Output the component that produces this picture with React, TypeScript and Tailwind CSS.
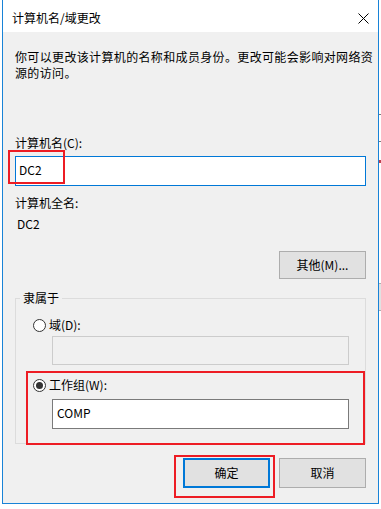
import React from 'react';

const font = { fontFamily: '"Noto Sans CJK SC", "Noto Sans", sans-serif' };

function Radio({ checked }: { checked?: boolean }) {
  return (
    <span className="w-[13px] h-[13px] rounded-full border border-[#333333] bg-white flex items-center justify-center shrink-0">
      {checked && <span className="w-[7px] h-[7px] rounded-full bg-[#333333]" />}
    </span>
  );
}

function Button({ label, focused }: { label: string; focused?: boolean }) {
  return (
    <div
      className={`w-[87px] h-[30px] flex items-center justify-center bg-[#e1e1e1] text-[12px] leading-4 text-black ${
        focused ? 'border-2 border-[#0078d7]' : 'border border-[#adadad]'
      }`}
    >
      {label}
    </div>
  );
}

export default function App() {
  return (
    <div className="w-[381px] h-[509px] bg-white relative overflow-hidden text-black" style={font}>
      {/* dialog window */}
      <div className="ml-[2px] w-[377px] h-[504px] border-x border-b border-[#1883d7] flex flex-col">
        {/* title bar */}
        <div className="h-[32px] bg-white flex items-center justify-between pl-[9px] pr-[9px] shrink-0">
          <span className="text-[12px] leading-4 mt-[4px]">计算机名/域更改</span>
          <svg width="11" height="11" viewBox="0 0 11 11" className="mt-[4px]">
            <path d="M0.5 0.5 L10.5 10.5 M10.5 0.5 L0.5 10.5" stroke="#000" strokeWidth="1" fill="none" />
          </svg>
        </div>

        {/* body */}
        <div className="flex-1 bg-[#f0f0f0] px-[12px] flex flex-col">
          <p className="mt-[17px] text-[12px] leading-4 tracking-[0.35px] whitespace-nowrap">
            你可以更改该计算机的名称和成员身份。更改可能会影响对网络资
            <br />
            源的访问。
          </p>

          <p className="mt-[54px] text-[12px] leading-4">计算机名(C):</p>
          <div className="mt-[5px] h-[30px] bg-white border border-[#0078d7] flex items-center pl-[3px] pb-[3px] text-[12px] leading-4">
            DC2
          </div>

          <p className="mt-[9px] text-[12px] leading-4">计算机全名:</p>
          <p className="mt-[5px] pl-[2px] text-[12px] leading-4">DC2</p>

          <div className="mt-[19px] flex justify-end">
            <div className="w-[87px] h-[28px] flex items-center justify-center bg-[#e1e1e1] border border-[#adadad] text-[12px] leading-4">
              其他(M)...
            </div>
          </div>

          {/* member of group */}
          <fieldset className="mt-[11px] border border-[#dcdcdc] pb-[14px] pr-[16px]">
            <legend className="ml-[4px] px-[3px] text-[12px] leading-4">隶属于</legend>
            <div className="mt-[11px] ml-[17px] h-[16px] flex items-center gap-[3px] text-[12px] leading-4">
              <Radio />
              <span>域(D):</span>
            </div>
            <div className="mt-[3px] ml-[36px] h-[29px] border border-[#cccccc] bg-[#f0f0f0]" />

            <div className="mt-[12px] ml-[17px] h-[16px] flex items-center gap-[3px] text-[12px] leading-4">
              <Radio checked />
              <span>工作组(W):</span>
            </div>
            <div className="mt-[6px] ml-[36px] h-[30px] border border-[#7a7a7a] bg-white flex items-center pl-[4px] pb-[2px] text-[12px] leading-4">
              COMP
            </div>
          </fieldset>

          <div className="mt-[14px] flex justify-end gap-[9px]">
            <Button label="确定" focused />
            <Button label="取消" />
          </div>
        </div>
      </div>

      {/* red annotation boxes */}
      <div className="absolute left-[8px] top-[150px] w-[57px] h-[34px] border-2 border-[#ed1c24]" />
      <div className="absolute left-[26px] top-[371px] w-[339px] h-[74px] border-2 border-[#ed1c24]" />
      <div className="absolute left-[174px] top-[455px] w-[101px] h-[43px] border-2 border-[#ed1c24]" />

      {/* edge of the window behind */}
      <div className="absolute left-[379px] top-[114px] w-[2px] h-px bg-[#7a7a7a]" />
      <div className="absolute left-[379px] top-[141px] w-[2px] h-px bg-[#7a7a7a]" />
      <div className="absolute left-[379px] top-[160px] w-[2px] h-[3px] bg-[#c04050]" />
      <div className="absolute left-[379px] top-[283px] w-[2px] h-[28px] bg-[#e1e1e1] border-y border-[#adadad]" />
    </div>
  );
}
